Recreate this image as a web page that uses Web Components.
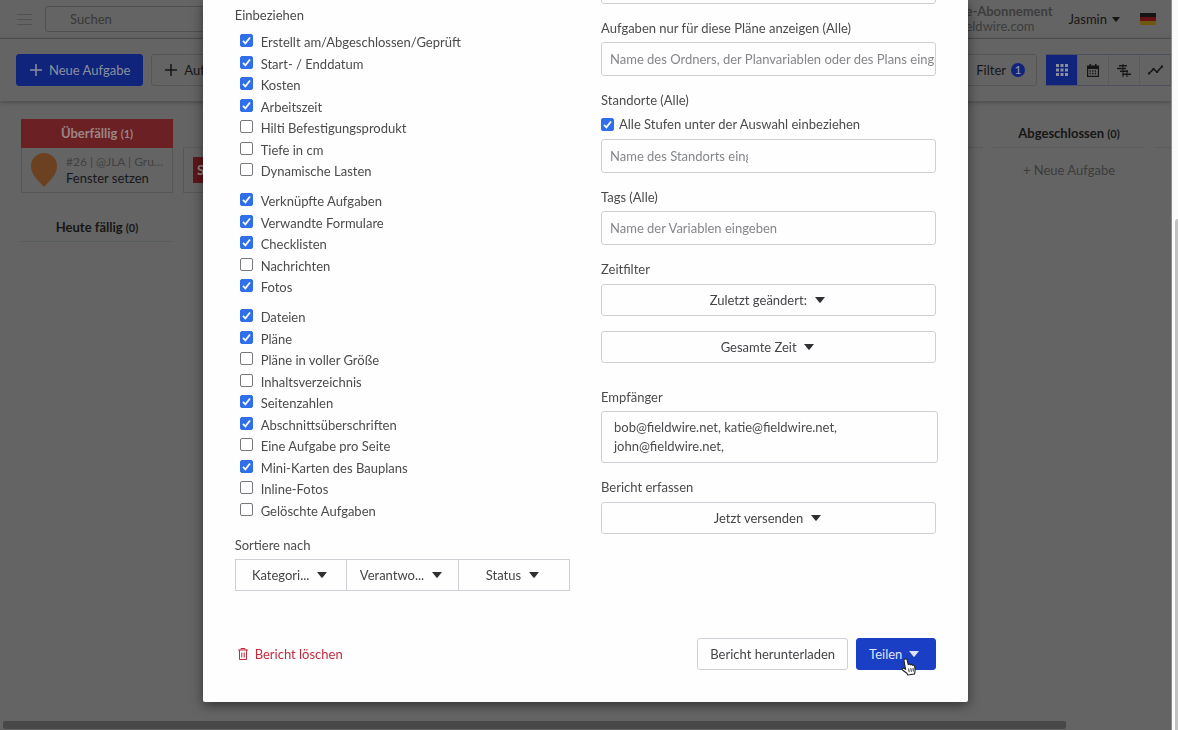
<!DOCTYPE html>
<html lang="de">
<head>
<meta charset="utf-8">
<title>Bericht</title>
<style>
  html, body {
    margin: 0;
    height: 100%;
    overflow: hidden;
  }
  body {
    font: 13px/20px Lato, "Liberation Sans", sans-serif;
    color: #4a4b4d;
    background: #646464;
  }
</style>
</head>
<body>
<report-app></report-app>

<script>
const caret = `<svg class="caret" viewBox="0 0 10 6" width="10" height="6" aria-hidden="true"><path d="M0 0h10L5.6 5.5q-.6.6-1.2 0z" fill="currentColor"/></svg>`;
const plus = `<svg width="12" height="12" viewBox="0 0 12 12" aria-hidden="true"><path d="M6 0v12M0 6h12" stroke="currentColor" stroke-width="1.5"/></svg>`;

// Attach an open shadow root filled with the given markup
const render = (el, html) => {
  const template = document.createElement("template");
  template.innerHTML = html;
  el.attachShadow({ mode: "open" });
  el.shadowRoot.appendChild(template.content.cloneNode(true));
};

class TopBar extends HTMLElement {
  constructor() {
    super();
    render(this, `
  <style>
    :host { display: flex; align-items: center; height: 38px; padding: 0 15px 0 17px; border-bottom: 1px solid #4e4e4e; color: #3d3d3d; }
    button { display: flex; align-items: center; gap: 5px; border: 0; padding: 0; background: none; font: inherit; color: #161616; }
    .menu { color: #515151; }
    input { box-sizing: border-box; width: 300px; height: 26px; margin-left: 13px; padding: 0 24px; border: 1px solid #505050; border-radius: 3px; background: none; font: inherit; color: #333; }
    input::placeholder { color: #383838; opacity: 1; }
    .plan { margin-left: auto; margin-right: 16px; line-height: 15px; }
    .plan b { display: block; }
    .flag { margin-left: 20px; }
    .caret { width: 8px; height: 5px; }
  </style>
  <button class="menu" aria-label="Menü"><svg width="15" height="13" viewBox="0 0 15 13"><path d="M0 1.5h15M0 6.5h15M0 11.5h15" stroke="currentColor"/></svg></button>
  <input type="search" placeholder="Suchen" aria-label="Suchen">
  <div class="plan"><b>e-Abonnement</b>eldwire.com</div>
  <button>Jasmin ${caret}</button>
  <svg class="flag" width="16" height="12" viewBox="0 0 16 12"><path fill="#151515" d="M0 0h16v4H0z"/><path fill="#641414" d="M0 4h16v4H0z"/><path fill="#6e5813" d="M0 8h16v4H0z"/></svg>`);
  }
}
customElements.define("top-bar", TopBar);

class TaskToolbar extends HTMLElement {
  constructor() {
    super();
    render(this, `
  <style>
    :host { display: flex; align-items: center; height: 62px; padding-left: 16px; box-shadow: 0 1px 5px #484848; position: relative; }
    button { box-sizing: border-box; display: flex; align-items: center; justify-content: center; gap: 7px; height: 32px; padding: 0 12px 0 13px; border: 1px solid #555; border-radius: 3px; background: none; font: inherit; color: #161616; }
    .primary { background: #10247c; border-color: #10247c; color: #8b8f9c; margin-right: 8px; }
    .filter { margin-left: auto; gap: 5px; padding: 0 11px; }
    .badge { width: 14px; height: 14px; border-radius: 7px; background: #10247c; color: #99a; font-size: 12px; line-height: 14px; text-align: center; }
    .views { display: flex; margin-left: 9px; border: solid #4c5060; border-width: 1px 0; }
    .views button { width: 31px; height: 30px; padding: 0; border: 0; border-right: 1px solid #5b5b5b; border-radius: 0; }
    .views .active { background: #10247c; color: #8b8f9c; width: 32px; }
  </style>
  <button class="primary">${plus} Neue Aufgabe</button>
  <button>${plus} Auf</button>
  <button class="filter">Filter <span class="badge">1</span></button>
  <div class="views">
    <button class="active" aria-label="Kanban"><svg width="12" height="12" viewBox="0 0 12 12" fill="currentColor"><path d="M0 0h3v3H0zM4.500 0h3v3h-3zM9 0h3v3H9zM0 4.500h3v3H0zM4.500 4.500h3v3h-3zM9 4.500h3v3H9zM0 9h3v3H0zM4.500 9h3v3h-3zM9 9h3v3H9z"/></svg></button>
    <button aria-label="Kalender"><svg width="12" height="13" viewBox="0 0 12 13"><path d="M.6 2.500h10.800v9.900H.6z" fill="none" stroke="currentColor" stroke-width="1.200"/><path d="M0 1.500h12V5H0zM2.500 0h1.500v2H2.500zM8 0h1.500v2H8z" fill="currentColor"/><path d="M2.500 7h7M2.500 9.500h7" stroke="currentColor" stroke-width="1.300" stroke-dasharray="1.300 1.300"/></svg></button>
    <button aria-label="Gantt"><svg width="14" height="13" viewBox="0 0 14 13" fill="none" stroke="currentColor"><path d="M2 1.800h8M0 4.500h9M3 7.300h8M5.500 10.300H14" stroke-width="1.500"/><path d="M6 0v13M10 6v7"/></svg></button>
    <button aria-label="Diagramm"><svg width="15" height="10" viewBox="0 0 15 10"><path d="M1 8.500 5.500 4 9 7l5-5.500" fill="none" stroke="currentColor" stroke-width="1.600"/><path d="M0 7.500h2v2H0zM4.500 3h2v2h-2zM8 6h2v2H8zM13 .5h2v2h-2z" fill="currentColor"/></svg></button>
  </div>`);
  }
}
customElements.define("task-toolbar", TaskToolbar);

class BoardColumn extends HTMLElement {
  constructor() {
    super();
    render(this, `
  <style>
    :host { display: block; flex: none; width: 152px; color: #161616; text-align: center; }
    h2 { box-sizing: border-box; height: 29px; margin: 0; font-size: 13px; line-height: 28px; border-bottom: 1px solid #565b5b; }
    small { font-size: 11px; }
    :host([overdue]) h2 { background: #6b2123; border-color: #6b2123; color: #9b8585; }
  </style>
  <h2>${this.getAttribute("name") || ""} ${this.hasAttribute("count") ? `<small>(${this.getAttribute("count")})</small>` : ""}</h2>
  <slot></slot>`);
  }
}
customElements.define("board-column", BoardColumn);

class TaskCard extends HTMLElement {
  constructor() {
    super();
    render(this, `
  <style>
    :host { box-sizing: border-box; display: flex; align-items: center; gap: 9px; height: 45px; padding: 0 4px 0 9px; border: 1px solid #575757; border-top: 0; text-align: left; }
    div { min-width: 0; line-height: 17px; color: #17171c; }
    .meta { font-size: 12px; color: #414141; overflow: hidden; text-overflow: ellipsis; white-space: nowrap; }
    ::slotted(svg) { flex: none; }
  </style>
  <slot name="pin"></slot>
  <div><div class="meta"><slot name="meta"></slot></div><slot></slot></div>`);
  }
}
customElements.define("task-card", TaskCard);

class TaskBoard extends HTMLElement {
  constructor() {
    super();
    render(this, `
  <style>
    :host { display: flex; gap: 10px; padding: 18px 0 0 21px; overflow: hidden; }
    .lane { display: grid; gap: 20px; align-content: start; flex: none; width: 152px; }
    .tag { width: 26px; height: 26px; background: #5f1619; color: #98898a; font-weight: bold; line-height: 26px; text-indent: 4px; }
    .add { display: block; width: 100%; margin-top: 12px; padding: 0; border: 0; background: none; font: inherit; color: #3c3c3c; }
  </style>
  <div class="lane">
    <board-column overdue name="Überfällig" count="1">
      <task-card>
        <svg slot="pin" width="26" height="34" viewBox="0 0 26 34"><path d="M13 0a13 13 0 0 1 13 13c0 9-7 14-13 21C7 27 0 22 0 13A13 13 0 0 1 13 0z" fill="#6c4121"/></svg>
        <span slot="meta">#26 | @JLA | Grundriss</span>
        Fenster setzen
      </task-card>
    </board-column>
    <board-column name="Heute fällig" count="0"></board-column>
  </div>
  <board-column><task-card><div slot="pin" class="tag">S</div></task-card></board-column>
  <board-column></board-column>
  <board-column></board-column>
  <board-column></board-column>
  <board-column></board-column>
  <board-column name="Abgeschlossen" count="0"><button class="add">+ Neue Aufgabe</button></board-column>
  <board-column></board-column>`);
  }
}
customElements.define("task-board", TaskBoard);

class CheckOption extends HTMLElement {
  constructor() {
    super();
    render(this, `
  <style>
    :host { display: block; height: 22px; line-height: 22px; }
    label { display: flex; align-items: center; gap: var(--gap, 5px); height: 100%; }
    input { appearance: none; flex: none; box-sizing: border-box; width: 13px; height: 13px; margin: 0 0 var(--lift, 0); border: 1px solid #77787b; border-radius: 2px; background: #fff; }
    input:checked { border-color: #2f6fea; background: #2f6fea url("data:image/svg+xml,%3Csvg xmlns='http://www.w3.org/2000/svg' viewBox='0 0 11 11'%3E%3Cpath d='M2 5.800 4.400 8.300 9 2.500' fill='none' stroke='white' stroke-width='1.800'/%3E%3C/svg%3E"); }
  </style>
  <label><input type="checkbox" ${this.hasAttribute("checked") ? "checked" : ""}><slot></slot></label>`);
  }
}
customElements.define("check-option", CheckOption);

class CheckGroup extends HTMLElement {
  constructor() {
    super();
    render(this, `
  <style>
    :host { display: block; padding-left: 5px; margin-bottom: 8px; --lift: 3px; --gap: 8px; }
    ::slotted(:nth-child(even)) { height: 21px; }
  </style>
  <slot></slot>`);
  }
}
customElements.define("check-group", CheckGroup);

class TextField extends HTMLElement {
  constructor() {
    super();
    const label = this.getAttribute("label");
    render(this, `
  <style>
    :host { display: block; }
    label { display: block; margin-bottom: 4px; }
    ::slotted(check-option) { height: 20px; margin-bottom: 5px; line-height: 20px; }
    .box { box-sizing: border-box; height: 34px; padding-left: 8px; border: 1px solid #cfd0d5; border-radius: 3px; display: flex; }
    input { width: 100%; border: 0; padding: 0; outline: 0; background: none; font: inherit; color: inherit; }
    :host([narrow]) input { width: 138px; }
    input::placeholder { color: #85868a; opacity: 1; }
  </style>
  ${label ? `<label for="field">${label}</label>` : ""}
  <slot></slot>
  <div class="box"><input id="field" type="text" placeholder="${this.getAttribute("placeholder") || ""}" ${label ? "" : `aria-label="Filter"`}></div>`);
  }
}
customElements.define("text-field", TextField);

class DropDown extends HTMLElement {
  constructor() {
    super();
    render(this, `
  <style>
    :host { box-sizing: border-box; display: flex; align-items: center; justify-content: center; gap: 7px; height: 32px; padding-right: 3px; border: 1px solid #cfd0d5; border-radius: 3px; color: #2e3033; }
    select { appearance: none; border: 0; padding: 0; background: none; font: inherit; color: #444548; }
  </style>
  <select aria-label="${this.getAttribute("name")}"><option>${this.getAttribute("value")}</option></select>${caret}`);
  }
}
customElements.define("drop-down", DropDown);

class ReportDialog extends HTMLElement {
  constructor() {
    super();
    render(this, `
  <style>
    :host { display: block; box-sizing: border-box; width: 65vw; padding: 0 32px; padding-bottom: 32px; background: #fefefe; border-radius: 0 0 2px 2px; box-shadow: 0 3px 12px rgba(0, 0, 0, .5); overflow: hidden; }
    .columns { display: grid; grid-template-columns: 1fr 1fr; gap: 31px; }
    .left { padding-top: 5px; }
    h3 { margin: 0 0 4px; font-size: 13px; font-weight: normal; }
    .left h3:first-child { margin-bottom: 6px; }
    .sort { display: flex; }
    .sort drop-down { flex: 1; border-radius: 0; }
    .sort drop-down + drop-down { margin-left: -1px; }
    .left h3:nth-of-type(2) { margin-top: 14px; }
    /* the first field is scrolled out, only its lower edge stays */
    .right { display: flex; flex-direction: column; gap: 14px; margin-top: -30px; }
    .right h3 { margin-bottom: 5px; }
    .right h3 + drop-down + drop-down { margin-top: 15px; }
    .right .recipients { margin-top: 10px; }
    .recipients label { display: block; margin-bottom: 4px; }
    textarea { display: block; box-sizing: border-box; width: calc(100% + 2px); height: 52px; padding: 6px 12px; border: 1px solid #cfd0d5; border-radius: 3px; background: none; resize: none; overflow: hidden; font: inherit; line-height: 19px; color: inherit; }
    footer { display: flex; align-items: center; gap: 8px; margin-top: 47px; }
    button { box-sizing: border-box; display: flex; align-items: center; gap: 7px; height: 32px; padding: 0 12px; border: 1px solid #cfd0d5; border-radius: 3px; background: none; font: inherit; color: #444548; }
    .delete { margin-right: auto; padding: 0 3px; border: 0; color: #c4293c; }
    .share { position: relative; padding: 0 16px 0 12px; border-color: #1b3fc4; background: #1b3fc4; color: #dfe4f8; }
    .pointer { position: absolute; left: 44px; top: 19px; }
  </style>
  <div class="columns">
    <section class="left">
      <h3>Einbeziehen</h3>
      <check-group>
        <check-option checked>Erstellt am/Abgeschlossen/Geprüft</check-option>
        <check-option checked>Start- / Enddatum</check-option>
        <check-option checked>Kosten</check-option>
        <check-option checked>Arbeitszeit</check-option>
        <check-option>Hilti Befestigungsprodukt</check-option>
        <check-option>Tiefe in cm</check-option>
        <check-option>Dynamische Lasten</check-option>
      </check-group>
      <check-group>
        <check-option checked>Verknüpfte Aufgaben</check-option>
        <check-option checked>Verwandte Formulare</check-option>
        <check-option checked>Checklisten</check-option>
        <check-option>Nachrichten</check-option>
        <check-option checked>Fotos</check-option>
      </check-group>
      <check-group>
        <check-option checked>Dateien</check-option>
        <check-option checked>Pläne</check-option>
        <check-option>Pläne in voller Größe</check-option>
        <check-option>Inhaltsverzeichnis</check-option>
        <check-option checked>Seitenzahlen</check-option>
        <check-option checked>Abschnittsüberschriften</check-option>
        <check-option>Eine Aufgabe pro Seite</check-option>
        <check-option checked>Mini-Karten des Bauplans</check-option>
        <check-option>Inline-Fotos</check-option>
        <check-option>Gelöschte Aufgaben</check-option>
      </check-group>
      <h3>Sortiere nach</h3>
      <div class="sort">
        <drop-down name="Sortierung 1" value="Kategori..."></drop-down>
        <drop-down name="Sortierung 2" value="Verantwo..."></drop-down>
        <drop-down name="Sortierung 3" value="Status"></drop-down>
      </div>
    </section>
    <section class="right">
      <text-field></text-field>
      <text-field label="Aufgaben nur für diese Pläne anzeigen (Alle)" placeholder="Name des Ordners, der Planvariablen oder des Plans eingeben"></text-field>
      <text-field narrow label="Standorte (Alle)" placeholder="Name des Standorts eingeben">
        <check-option checked>Alle Stufen unter der Auswahl einbeziehen</check-option>
      </text-field>
      <text-field label="Tags (Alle)" placeholder="Name der Variablen eingeben"></text-field>
      <div>
        <h3>Zeitfilter</h3>
        <drop-down name="Zeitfilter" value="Zuletzt geändert:"></drop-down>
        <drop-down name="Zeitraum" value="Gesamte Zeit"></drop-down>
      </div>
      <div class="recipients">
        <label for="recipients">Empfänger</label>
        <textarea id="recipients">bob@fieldwire.net, katie@fieldwire.net, john@fieldwire.net,</textarea>
      </div>
      <div>
        <h3>Bericht erfassen</h3>
        <drop-down name="Bericht erfassen" value="Jetzt versenden"></drop-down>
      </div>
    </section>
  </div>
  <footer>
    <button class="delete"><svg width="10" height="12" viewBox="0 0 10 12" fill="none" stroke="currentColor"><path d="M0 2h10M3 2V.5h4V2M1.500 2v9.500h7V2M3.800 4.500v5M6.200 4.500v5"/></svg> Bericht löschen</button>
    <button>Bericht herunterladen</button>
    <button class="share">Teilen ${caret}
      <svg class="pointer" width="16" height="18" viewBox="0 0 16 18"><path d="M4.200 1C5.300.6 6 1.300 6.200 2.200L7.200 6.500c.8-.8 1.800-.5 2.100.2.8-.6 1.800-.3 2.100.5 1-.4 1.900.1 2.200 1.100.5 2.100 1.100 4.400.2 6.700L13.500 16l-6.700 1-1-1.800L1.500 12c-1-1 0-2.200 1.300-1.700l1.700.9L3 2.600C2.800 1.800 3.400 1.200 4.200 1z" fill="#fff" stroke="#222" stroke-width="1.100"/><path d="m7.600 10.500.6 3.700M9.800 10.200l.6 3.600M12 10l.4 3.500" stroke="#222" stroke-width=".9"/></svg>
    </button>
  </footer>`);
  }
}
customElements.define("report-dialog", ReportDialog);

class ReportApp extends HTMLElement {
  constructor() {
    super();
    render(this, `
  <style>
    :host { display: grid; grid-template-columns: minmax(0, 1fr) 7px; height: 100vh; overflow: hidden; }
    main { display: flex; flex-direction: column; min-height: 0; overflow: hidden; }
    task-board { flex: 1; }
    .hbar { height: 9px; margin-left: 3px; }
    .hbar i { display: block; width: 91%; height: 8px; border-radius: 2px; background: #484848; }
    .vbar { background: #fafafa; border-left: 1px solid #8a8a8a; box-sizing: border-box; display: flex; align-items: flex-end; justify-content: flex-end; }
    .vbar i { width: 3px; height: 70%; border-radius: 3px 0 0 0; background: #c2c2c2; }
    .modal { position: fixed; inset: 0 7px 0 0; display: flex; justify-content: center; align-items: flex-start; }
  </style>
  <main>
    <top-bar></top-bar>
    <task-toolbar></task-toolbar>
    <task-board></task-board>
    <div class="hbar"><i></i></div>
  </main>
  <div class="vbar"><i></i></div>
  <div class="modal"><report-dialog></report-dialog></div>`);
  }
}
customElements.define("report-app", ReportApp);
</script>
</body>
</html>
